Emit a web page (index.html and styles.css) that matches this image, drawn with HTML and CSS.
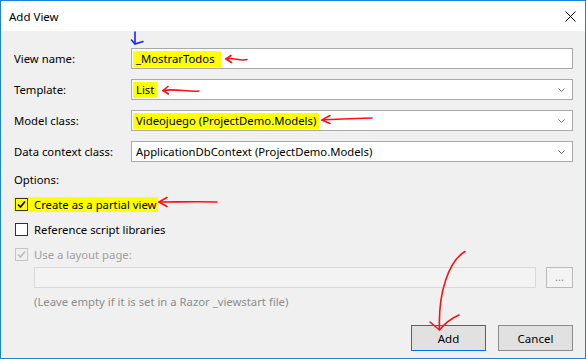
FILE: index.html
```html
<!DOCTYPE html>
<html lang="en">
<head>
    <meta charset="UTF-8">
    <meta name="viewport" content="width=device-width, initial-scale=1.0">
    <title>Add View</title>
    <link rel="stylesheet" href="styles.css">
</head>
<body>

    <div class="dialog">
        <div class="titlebar">
            <span class="title">Add View</span>
            <span class="close">
                <svg width="11" height="11" viewBox="0 0 11 11"><path d="M0.5 0.5 L10.5 10.5 M10.5 0.5 L0.5 10.5" stroke="#000" stroke-width="1" fill="none"/></svg>
            </span>
        </div>

        <div class="dialog-body">
            <!-- Main fields -->
            <div class="fields">
                <span class="field-label">View name:</span>
                <div class="textbox"><span class="mark mark-name">_MostrarTodos</span></div>

                <span class="field-label">Template:</span>
                <div class="textbox combo">
                    <span class="mark">List</span>
                    <svg class="chevron" width="7" height="4" viewBox="0 0 7 4"><path d="M0.5 0.5 L3.5 3.5 L6.5 0.5" stroke="#707070" fill="none"/></svg>
                </div>

                <span class="field-label">Model class:</span>
                <div class="textbox combo">
                    <span class="mark">Videojuego (ProjectDemo.Models)</span>
                    <svg class="chevron" width="7" height="4" viewBox="0 0 7 4"><path d="M0.5 0.5 L3.5 3.5 L6.5 0.5" stroke="#707070" fill="none"/></svg>
                </div>

                <span class="field-label">Data context class:</span>
                <div class="textbox combo">
                    <span>ApplicationDbContext (ProjectDemo.Models)</span>
                    <svg class="chevron" width="7" height="4" viewBox="0 0 7 4"><path d="M0.5 0.5 L3.5 3.5 L6.5 0.5" stroke="#707070" fill="none"/></svg>
                </div>
            </div>

            <!-- Options -->
            <div class="options-label">Options:</div>
            <div class="checks">
                <div class="check-row">
                    <span class="check mark">
                        <span class="box">
                            <svg width="11" height="11" viewBox="0 0 11 11"><path d="M2 5.5 L4.5 8 L9 2.5" stroke="#000" stroke-width="1.6" fill="none"/></svg>
                        </span>
                        Create as a partial view
                    </span>
                </div>
                <div class="check-row">
                    <span class="check">
                        <span class="box"></span>
                        Reference script libraries
                    </span>
                </div>
                <div class="check-row">
                    <span class="check disabled">
                        <span class="box">
                            <svg width="11" height="11" viewBox="0 0 11 11"><path d="M2 5.5 L4.5 8 L9 2.5" stroke="#bcbcbc" stroke-width="1.6" fill="none"/></svg>
                        </span>
                        Use a layout page:
                    </span>
                </div>
            </div>

            <div class="layout-row">
                <div class="textbox disabled"></div>
                <button class="browse">...</button>
            </div>
            <p class="hint">(Leave empty if it is set in a Razor _viewstart file)</p>

            <div class="actions">
                <button class="btn btn-default">Add</button>
                <button class="btn">Cancel</button>
            </div>
        </div>

        <!-- Hand-drawn annotations on top of the screenshot -->
        <svg class="annotations" width="586" height="359" viewBox="0 0 586 359">
            <g stroke="#1f1fff" stroke-width="1.6" fill="none" stroke-linecap="round">
                <path d="M135 32 L135 43.5"/>
                <path d="M131.5 40 L135 44 L143 41.5"/>
            </g>
            <g stroke="#ff1010" stroke-width="1.6" fill="none" stroke-linecap="round" stroke-linejoin="round">
                <path d="M226 59 C233 57 240 61.5 247 59.5"/>
                <path d="M231 55.5 L226 59 L231.5 62.5"/>

                <path d="M163 90.5 C175 88 188 92.5 199 91"/>
                <path d="M168 86.5 L163 90.5 L168.5 94"/>

                <path d="M322 120 C338 119 355 118.5 372 118"/>
                <path d="M330 115.5 L322 120 L330 123.5"/>

                <path d="M159 202 C178 202 198 201.5 217 202"/>
                <path d="M167 197.5 L159 202 L167 206.5"/>

                <path d="M465 251.5 C449 261 438 292 439.5 330"/>
                <path d="M430 322 L439.5 330 C446 322 452 318 459 315"/>
            </g>
        </svg>
    </div>

</body>
</html>
```

FILE: styles.css
```css
/* General */
body {
    margin: 0;
    padding: 0;
    font-family: "Noto Sans", "Open Sans", sans-serif;
    font-size: 11.3px;
    color: #000;
}

/* Window frame */
.dialog {
    position: relative;
    width: 586px;
    height: 359px;
    box-sizing: border-box;
    border: 1px solid #1883d7;
    background: #f0f0f0;
}
.titlebar {
    height: 30px;
    background: #fff;
    display: flex;
    align-items: center;
    justify-content: space-between;
    padding: 0 8px 0 8px;
}
.title {
    font-size: 11.5px;
}
.close {
    display: flex;
    width: 14px;
    justify-content: center;
}

/* Body */
.dialog-body {
    padding: 17px 12px 0 13px;
}
.fields {
    display: grid;
    grid-template-columns: 117px 1fr;
    row-gap: 10px;
    align-items: center;
}
.textbox {
    height: 21px;
    box-sizing: border-box;
    border: 1px solid #a9a9a9;
    background: #fff;
    display: flex;
    align-items: center;
    padding-left: 4px;
    line-height: 16px;
}
.combo {
    justify-content: space-between;
    padding-right: 7px;
}
.chevron {
    flex: none;
}
.mark {
    background: #ffff00;
    margin-left: -3px;
    padding: 0 3px;
}
.mark-name {
    padding-right: 6px;
}

/* Options */
.options-label {
    margin-top: 10px;
    line-height: 16px;
}
.checks {
    margin-top: 9px;
    display: flex;
    flex-direction: column;
    gap: 10px;
}
.check-row {
    display: flex;
    height: 15px;
}
.check {
    display: inline-flex;
    align-items: center;
    gap: 6px;
    height: 15px;
    line-height: 13px;
    padding: 0 2px 0 1px;
}
.check.mark {
    margin-left: 0;
}
.box {
    width: 13px;
    height: 13px;
    box-sizing: border-box;
    border: 1px solid #333;
    background: #fff;
    display: flex;
    align-items: center;
    justify-content: center;
}
.check.mark .box {
    background: #ffff00;
}
.check.disabled {
    color: #a0a0a0;
}
.check.disabled .box {
    border-color: #c4c4c4;
    background: #f0f0f0;
}

/* Layout page picker */
.layout-row {
    margin-top: 5px;
    padding-left: 20px;
    display: flex;
    gap: 10px;
}
.layout-row .textbox {
    flex: 1;
}
.textbox.disabled {
    border-color: #d9d9d9;
    background: #f3f3f3;
}
.browse {
    width: 27px;
    height: 21px;
    box-sizing: border-box;
    border: 1px solid #b9b9b9;
    background: #f3f3f3;
    color: #8a8a8a;
    font-family: inherit;
    font-size: 11px;
    padding: 0 0 3px 0;
}
.hint {
    margin: 6px 0 0 0;
    padding-left: 20px;
    line-height: 16px;
    color: #8d8d8d;
}

/* Buttons */
.actions {
    margin-top: 15px;
    display: flex;
    justify-content: flex-end;
    gap: 12px;
}
.btn {
    width: 75px;
    height: 26px;
    box-sizing: border-box;
    border: 1px solid #8c8c8c;
    background: #e1e1e1;
    font-family: inherit;
    font-size: 11.5px;
    color: #000;
    padding: 0;
}
.btn-default {
    border-color: #0078d7;
}

/* Annotation overlay */
.annotations {
    position: absolute;
    left: -1px;
    top: -1px;
    pointer-events: none;
}
```
